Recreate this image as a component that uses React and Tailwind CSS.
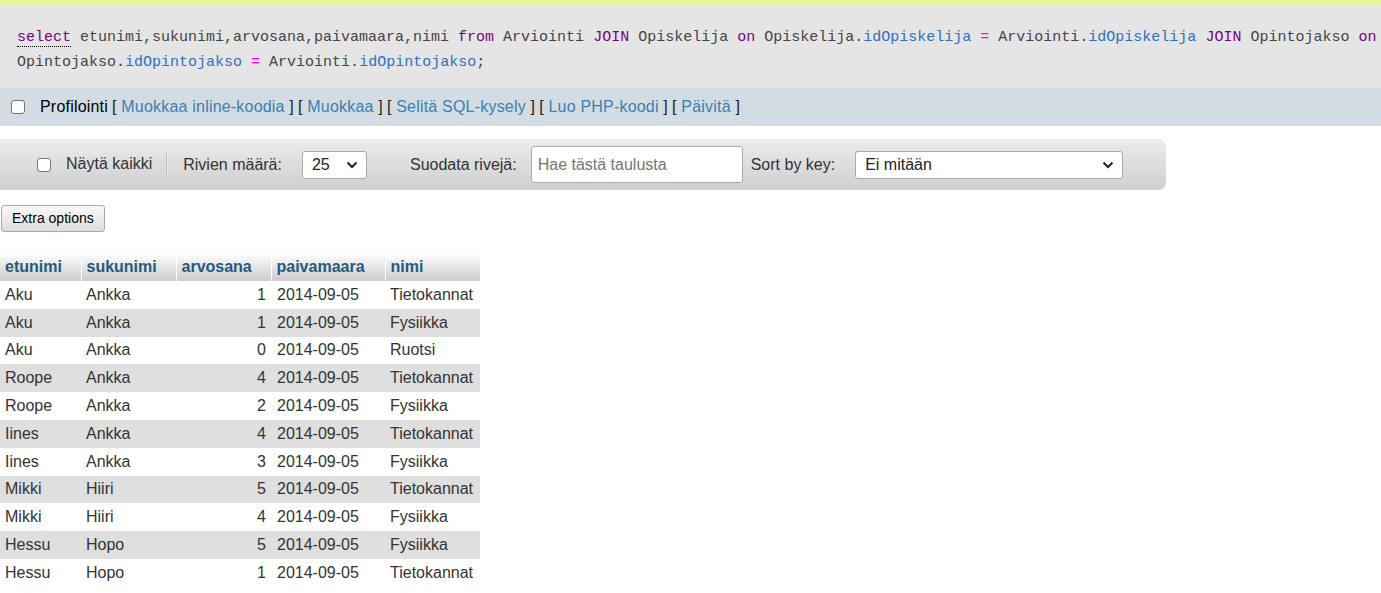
import React from 'react';

const rows = [
    ['Aku', 'Ankka', 1, 'Tietokannat'],
    ['Aku', 'Ankka', 1, 'Fysiikka'],
    ['Aku', 'Ankka', 0, 'Ruotsi'],
    ['Roope', 'Ankka', 4, 'Tietokannat'],
    ['Roope', 'Ankka', 2, 'Fysiikka'],
    ['Iines', 'Ankka', 4, 'Tietokannat'],
    ['Iines', 'Ankka', 3, 'Fysiikka'],
    ['Mikki', 'Hiiri', 5, 'Tietokannat'],
    ['Mikki', 'Hiiri', 4, 'Fysiikka'],
    ['Hessu', 'Hopo', 5, 'Fysiikka'],
    ['Hessu', 'Hopo', 1, 'Tietokannat'],
];

const K = ({ children }) => <span className="text-[#770088]">{children}</span>;
const V = ({ children }) => <span className="text-[#2f6fc4]">{children}</span>;
const Op = () => <span className="text-[#fa00fa]">=</span>;

const Chevron = () => (
    <svg width="12" height="8" viewBox="0 0 12 8" className="shrink-0">
        <path d="M1.5 1.5 L6 6 L10.5 1.5" fill="none" stroke="#222" strokeWidth="2" />
    </svg>
);

const Box = () => (
    <span className="inline-block w-[14px] h-[14px] rounded-[3px] border border-[#767676] bg-white shrink-0" />
);

const App = () => {
    return (
        <div className="w-[1381px] h-[593px] overflow-hidden bg-white font-['Liberation_Sans',Arial,sans-serif] text-[#333]">
            <div className="h-[5px] bg-[#e9f59a]" />

            <div className="h-[83px] bg-[#e5e5e5] pl-[17px] pt-[20px] font-['Liberation_Mono',monospace] text-[15px] leading-[25px] text-[#444] whitespace-pre overflow-hidden">
                <div>
                    <span className="text-[#770088] border-b border-dotted border-black">select</span> etunimi,sukunimi,arvosana,paivamaara,nimi <K>from</K> Arviointi <K>JOIN</K> Opiskelija <K>on</K> Opiskelija.<V>idOpiskelija</V> <Op /> Arviointi.<V>idOpiskelija</V> <K>JOIN</K> Opintojakso <K>on</K>
                </div>
                <div>
                    Opintojakso.<V>idOpintojakso</V> <Op /> Arviointi.<V>idOpintojakso</V>;
                </div>
            </div>

            <div className="h-[38px] bg-[#d3dce3] flex items-center pl-[11px] text-[16px] tracking-[0.2px]">
                <Box />
                <span className="ml-[15px] text-black">Profilointi</span>
                <span className="ml-[4px] text-[#222]">[ <a className="text-[#3c7fb1]">Muokkaa inline-koodia</a> ]</span>
                <span className="ml-[4px] text-[#222]">[ <a className="text-[#3c7fb1]">Muokkaa</a> ]</span>
                <span className="ml-[4px] text-[#222]">[ <a className="text-[#3c7fb1]">Selitä SQL-kysely</a> ]</span>
                <span className="ml-[4px] text-[#222]">[ <a className="text-[#3c7fb1]">Luo PHP-koodi</a> ]</span>
                <span className="ml-[4px] text-[#222]">[ <a className="text-[#3c7fb1]">Päivitä</a> ]</span>
            </div>

            <div className="mt-[13px] w-[1166px] h-[51px] rounded-r-[8px] bg-gradient-to-b from-[#ececec] to-[#cfcfcf] flex items-center text-[16px] text-[#333]">
                <div className="ml-[37px] flex items-center">
                    <Box />
                    <span className="ml-[15px] -mt-[2px]">Näytä kaikki</span>
                </div>
                <div className="ml-[14px] w-[2px] h-[23px] bg-gradient-to-r from-[#aaa] to-white" />
                <span className="ml-[15px]">Rivien määrä:</span>
                <div className="ml-[20px] w-[65px] h-[28px] bg-white border border-[#aaa] rounded-[3px] flex items-center justify-between pl-[9px] pr-[8px] text-[#222]">
                    <span>25</span>
                    <Chevron />
                </div>
                <span className="ml-[43px]">Suodata rivejä:</span>
                <div className="ml-[14px] w-[212px] h-[37px] bg-white border border-[#aaa] rounded-[3px] flex items-center pl-[6px] text-[#757575]">
                    Hae tästä taulusta
                </div>
                <span className="ml-[8px]">Sort by key:</span>
                <div className="ml-[20px] w-[268px] h-[28px] bg-white border border-[#aaa] rounded-[3px] flex items-center justify-between pl-[9px] pr-[8px] text-[#222]">
                    <span>Ei mitään</span>
                    <Chevron />
                </div>
            </div>

            <div className="mt-[15px] ml-[1px]">
                <button className="h-[27px] px-[10px] text-[14px] text-black rounded-[3px] border border-[#aaa] bg-gradient-to-b from-[#f8f8f8] to-[#dedede]">
                    Extra options
                </button>
            </div>

            <table className="mt-[21px] border-collapse text-[16px] text-[#333]">
                <thead>
                    <tr className="h-[28px] bg-gradient-to-b from-white to-[#cccccc] text-[#235a81] font-bold text-left">
                        <th className="w-[81px] pl-[5px] border-r border-white">etunimi</th>
                        <th className="w-[95px] pl-[5px] border-r border-white">sukunimi</th>
                        <th className="w-[95px] pl-[5px] border-r border-white">arvosana</th>
                        <th className="w-[114px] pl-[5px] border-r border-white">paivamaara</th>
                        <th className="w-[95px] pl-[5px]">nimi</th>
                    </tr>
                </thead>
                <tbody>
                    {rows.map((r, i) => (
                        <tr key={i} className={`h-[27.8px] ${i % 2 === 1 ? 'bg-[#dfdfdf]' : 'bg-white'}`}>
                            <td className="pl-[5px]">{r[0]}</td>
                            <td className="pl-[5px]">{r[1]}</td>
                            <td className="pr-[5px] text-right">{r[2]}</td>
                            <td className="pl-[6px]">2014-09-05</td>
                            <td className="pl-[5px] pr-[4px] whitespace-nowrap">{r[3]}</td>
                        </tr>
                    ))}
                </tbody>
            </table>
        </div>
    );
};

export default App;
